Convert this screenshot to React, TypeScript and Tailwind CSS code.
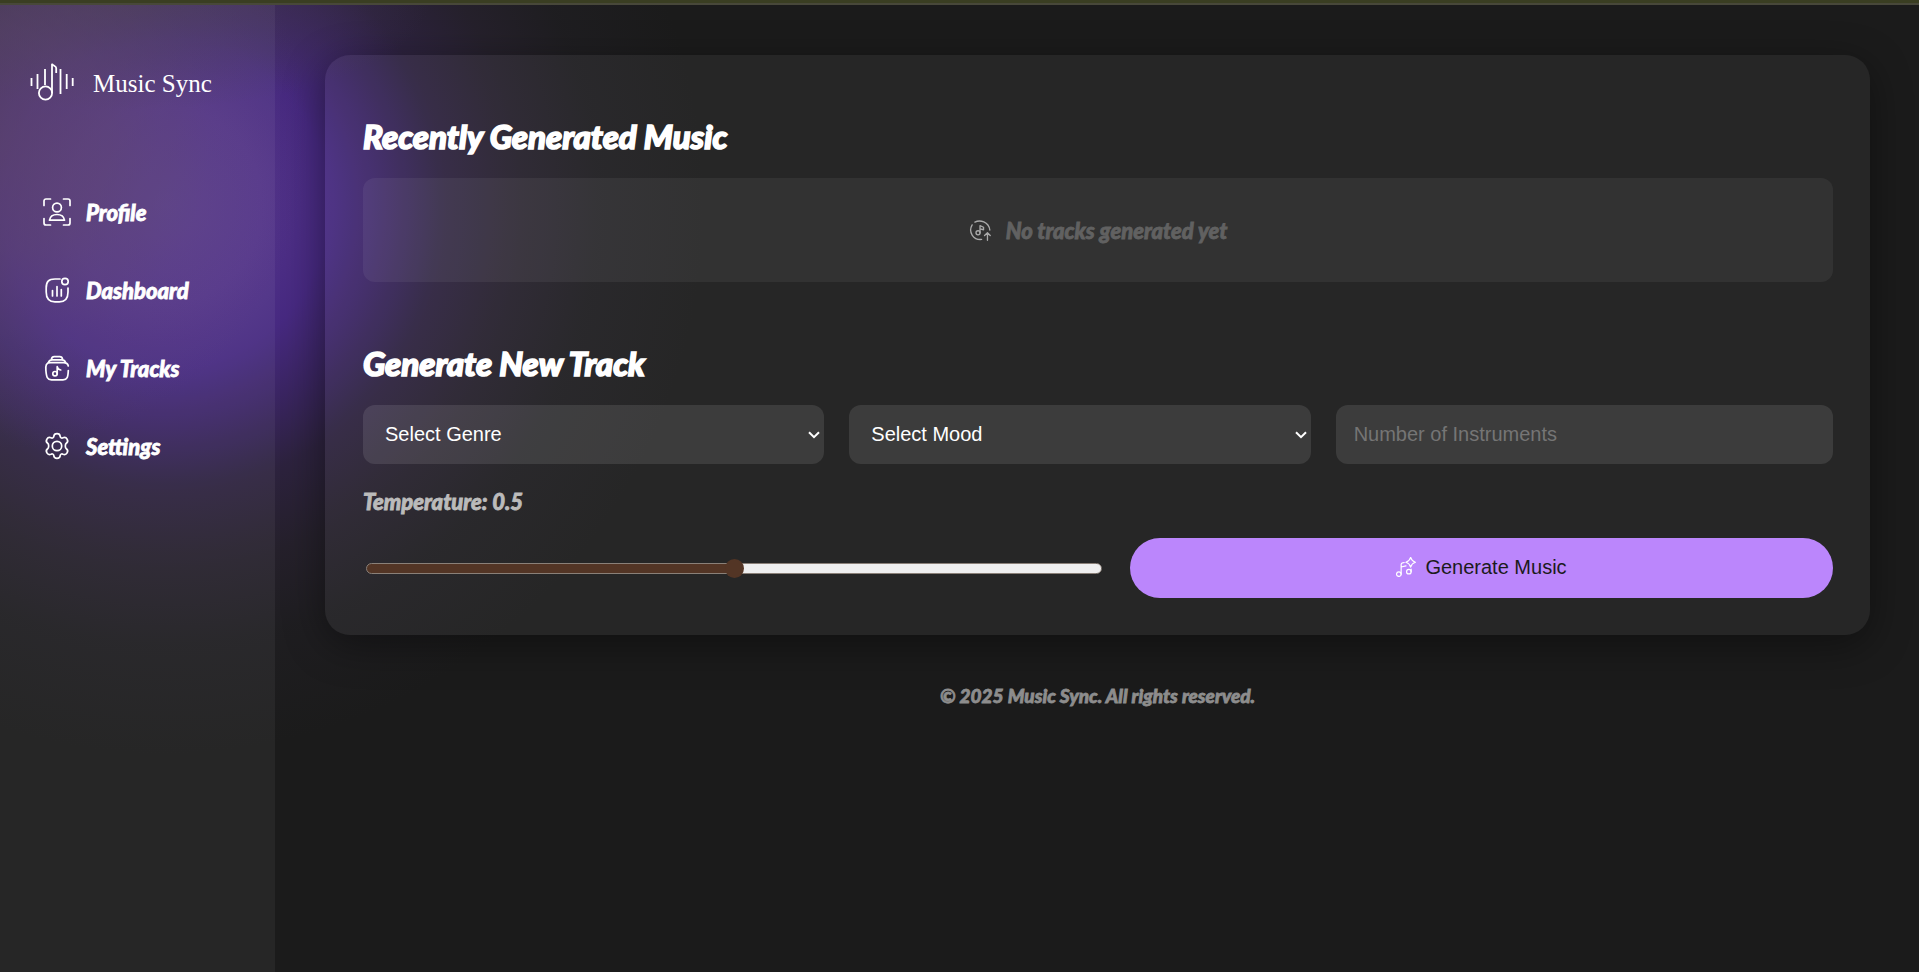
import { useState } from "react";
import type { ReactNode } from "react";

const display =
  "font-['Lato','Open_Sans',sans-serif] font-black italic [-webkit-text-stroke:0.8px_currentColor]";
const heading =
  "font-['Lato','Open_Sans',sans-serif] font-black italic text-[33px] leading-[48px] [-webkit-text-stroke:1.6px_currentColor]";
const control = "font-['Liberation_Sans',Arial,sans-serif] text-xl";

function Icon({ size, children }: { size: string; children: ReactNode }) {
  return (
    <svg
      className={`${size} shrink-0`}
      viewBox="0 0 28 28"
      fill="none"
      stroke="currentColor"
      strokeWidth="1.7"
      strokeLinecap="round"
      strokeLinejoin="round"
      aria-hidden="true"
    >
      {children}
    </svg>
  );
}

function LogoMark() {
  return (
    <svg
      className="h-10 w-11 shrink-0"
      viewBox="0 0 44 40"
      fill="none"
      stroke="currentColor"
      strokeWidth="1.8"
      aria-hidden="true"
    >
      <path d="M1.500 16v8M7.500 12v15M15 7v16M30.500 7v25M36.700 12v15M42.700 16v8" />
      <circle cx="15.500" cy="31" r="6.600" />
      <path d="M22 31V1.800C23 4 26.200 3.600 26.200 6v5" />
    </svg>
  );
}

function SelectField({ label, placeholder }: { label: string; placeholder: string }) {
  return (
    <div className="relative">
      <select
        aria-label={label}
        className={`h-[59px] w-full appearance-none rounded-xl bg-white/10 pb-0.5 pl-[22px] pr-8 ${control}`}
      >
        <option className="text-black">{placeholder}</option>
      </select>
      <svg
        className="pointer-events-none absolute right-1 top-[26px] h-2 w-3"
        viewBox="0 0 12 8"
        fill="none"
        stroke="currentColor"
        strokeWidth="2"
        aria-hidden="true"
      >
        <path d="M1 1.200l5 5 5-5" />
      </svg>
    </div>
  );
}

const navItems = [
  {
    label: "Profile",
    icon: (
      <>
        <path d="M1 7.500V3a2 2 0 0 1 2-2h4.500M20.500 1H25a2 2 0 0 1 2 2v4.500M27 20.500V25a2 2 0 0 1-2 2h-4.500M7.500 27H3a2 2 0 0 1-2-2v-4.500" />
        <circle cx="14" cy="9.500" r="4.400" />
        <path d="M6.500 22.200c.6-3.600 3.300-5.700 7.500-5.700s6.900 2.100 7.500 5.700z" />
      </>
    ),
  },
  {
    label: "Dashboard",
    icon: (
      <>
        <path d="M17 3h-5C5.500 3 3.200 5.500 3.200 12v4c0 6.500 2.300 9.800 8.800 9.800h4.300c6.500 0 8.700-3.300 8.700-9.800v-4" />
        <circle cx="22" cy="5.500" r="3.200" />
        <path d="M9.500 14.500v5.500M14 10.500v9.500M18.300 13.500v6.500" />
      </>
    ),
  },
  {
    label: "My Tracks",
    icon: (
      <>
        <path d="M25.300 16.500c-.3 6.800-1 9.300-5.300 9.300H8.500c-4.300 0-5-2.500-5.600-9.300C2.500 11 3 8.700 7.500 8.700h13c2.900 0 4.400 1 4.800 3.300" />
        <path d="M5.500 8.300c.6-1.800 1.500-2.500 3.500-2.500h10c2 0 2.900.7 3.500 2.500M8.500 5c.3-1.700 1.200-2.300 2.700-2.300h5.600c1.500 0 2.400.6 2.700 2.300" />
        <circle cx="12" cy="19.700" r="2.200" />
        <path d="M14.200 19.700v-7c.3 2 1.500 3 3.500 3.300" />
      </>
    ),
  },
  {
    label: "Settings",
    icon: (
      <>
        <circle cx="14" cy="14" r="4.700" />
        <path d="M10.800 4.300C11 2.400 11.700 1.600 14 1.600s3 .8 3.200 2.700c.2 1.500 1.400 2.200 2.800 1.500 1.800-.8 3-.6 4.100 1.300 1.100 1.900.8 3.100-.8 4.200-1.300.9-1.300 4.500 0 5.400 1.600 1.100 1.900 2.300.8 4.200-1.100 1.900-2.300 2.100-4.100 1.300-1.400-.7-2.600 0-2.800 1.500-.2 1.900-.9 2.700-3.200 2.700s-3-.8-3.200-2.700c-.2-1.500-1.400-2.200-2.800-1.500-1.800.8-3 .6-4.100-1.300-1.100-1.900-.8-3.100.8-4.200 1.300-.9 1.300-4.500 0-5.400-1.600-1.100-1.900-2.300-.8-4.200 1.100-1.900 2.300-2.100 4.100-1.300 1.400.7 2.600 0 2.800-1.500z" />
      </>
    ),
  },
];

function Sidebar() {
  return (
    <aside className="w-[275px] shrink-0 bg-white/5 px-[30px] pt-[57px]">
      <a href="#home" className="flex items-center gap-[19px]">
        <LogoMark />
        <span className="pt-1 font-['Liberation_Serif',serif] text-[25px] leading-9">
          Music Sync
        </span>
      </a>
      <nav className="mt-[90px] flex flex-col gap-[38px] pl-[13px]">
        {navItems.map((item) => (
          <a
            key={item.label}
            href={`#${item.label.toLowerCase().replace(" ", "-")}`}
            className={`flex h-10 items-center gap-[15px] text-[22px] ${display}`}
          >
            <Icon size="size-7">{item.icon}</Icon>
            {item.label}
          </a>
        ))}
      </nav>
    </aside>
  );
}

export default function App() {
  const [temperature, setTemperature] = useState(0.5);
  const fill = `${temperature * 100}%`;

  return (
    <div className="relative isolate flex min-h-screen flex-col bg-[#1b1b1b] text-white">
      <div className="absolute inset-0 -z-10 bg-[radial-gradient(circle_at_0px_140px,rgba(86,62,92,0.6)_0px,rgba(86,62,98,0.5)_110px,rgba(84,60,108,0.2)_210px,transparent_310px),radial-gradient(ellipse_300px_110px_at_130px_0px,rgba(66,54,74,0.75)_0%,rgba(66,54,78,0.4)_50%,transparent_100%),radial-gradient(ellipse_540px_550px_at_165px_205px,#57398c_0%,#513289_18%,rgba(73,42,134,0.95)_30%,rgba(68,40,120,0.75)_41%,rgba(64,42,100,0.48)_52%,rgba(60,44,80,0.3)_66%,rgba(54,46,70,0.13)_80%,transparent_100%)]" />
      <div className="h-[5px] border-b-2 border-[#48483a] bg-[#3a3e22]" />
      <div className="flex grow">
        <Sidebar />
        <div className="flex min-w-0 grow flex-col px-[50px] pr-[49px] pt-[50px]">
          <main className="rounded-[25px] bg-white/5 pb-[37px] pl-[38px] pr-[37px] pt-[57px] shadow-[0_10px_40px_rgba(0,0,0,0.4)]">
            <section>
              <h2 className={heading}>Recently Generated Music</h2>
              <div className="mt-[18px] flex h-[104px] items-center justify-center gap-[15px] rounded-xl bg-white/6 text-[#aaaaaa]">
                <Icon size="size-[22px]">
                  <path d="M7.500 4C14 .5 25 3.500 26.500 14M4 7.500C-1.500 17 6 27 16 26M23.500 27v-9M19.800 21l3.700-3.500 3.500 3.500" />
                  <circle cx="11.500" cy="17.500" r="2.600" />
                  <path d="M14 17.500V8.500l4.500 2v3.200L14 12.500" />
                </Icon>
                <p className={`text-[22px] text-[#616161] ${display}`}>No tracks generated yet</p>
              </div>
            </section>

            <form className="mt-[57px]" onSubmit={(e) => e.preventDefault()}>
              <h2 className={heading}>Generate New Track</h2>
              <div className="mt-[18px] grid grid-cols-[461fr_461fr_497fr] gap-[25px]">
                <SelectField label="Genre" placeholder="Select Genre" />
                <SelectField label="Mood" placeholder="Select Mood" />
                <input
                  type="number"
                  aria-label="Number of Instruments"
                  placeholder="Number of Instruments"
                  className={`h-[59px] w-full rounded-xl bg-white/10 px-[18px] placeholder:text-[#757575] ${control}`}
                />
              </div>
              <label
                htmlFor="temperature"
                className={`mt-[23px] block text-[22px] leading-[30px] text-[#bbbbbb] ${display}`}
              >
                Temperature: {temperature}
              </label>
              <div className="mt-[21px] flex items-center gap-7">
                <div className="grow basis-0 pl-[3px]">
                  <input
                    id="temperature"
                    type="range"
                    min="0"
                    max="1"
                    step="0.1"
                    value={temperature}
                    onChange={(e) => setTemperature(Number(e.target.value))}
                    style={{
                      backgroundImage: `linear-gradient(to right, #533525 ${fill}, #efefef ${fill})`,
                    }}
                    className="block h-[11px] w-full appearance-none rounded-full border border-[#8a8078] [&::-webkit-slider-thumb]:size-[19px] [&::-webkit-slider-thumb]:appearance-none [&::-webkit-slider-thumb]:rounded-full [&::-webkit-slider-thumb]:bg-[#533525]"
                  />
                </div>
                <button
                  type="submit"
                  className={`flex h-[60px] w-[703px] items-center justify-center gap-[9px] rounded-full bg-[#bb86fc] pb-0.5 text-[#1b1b1b] ${control}`}
                >
                  <span className="text-white">
                    <Icon size="size-5">
                      <circle cx="4" cy="24" r="3.200" />
                      <circle cx="18" cy="20.500" r="3.200" />
                      <path d="M7.200 24V10.500c0-1.500.6-2 2-2.300l2.300-.5M7.200 14l6.800-1.600M21.200 20.500V17" />
                      <path d="M20.500 .5c1.200 4.400 2.300 5.500 6.700 6.800-4.400 1.300-5.500 2.400-6.700 6.800-1.200-4.400-2.300-5.500-6.700-6.800 4.400-1.300 5.500-2.400 6.700-6.800z" />
                    </Icon>
                  </span>
                  Generate Music
                </button>
              </div>
            </form>
          </main>
          <footer
            className={`mt-[46px] text-center text-[19px] leading-[30px] text-[#8d8d8d] ${display}`}
          >
            © 2025 Music Sync. All rights reserved.
          </footer>
        </div>
      </div>
    </div>
  );
}
